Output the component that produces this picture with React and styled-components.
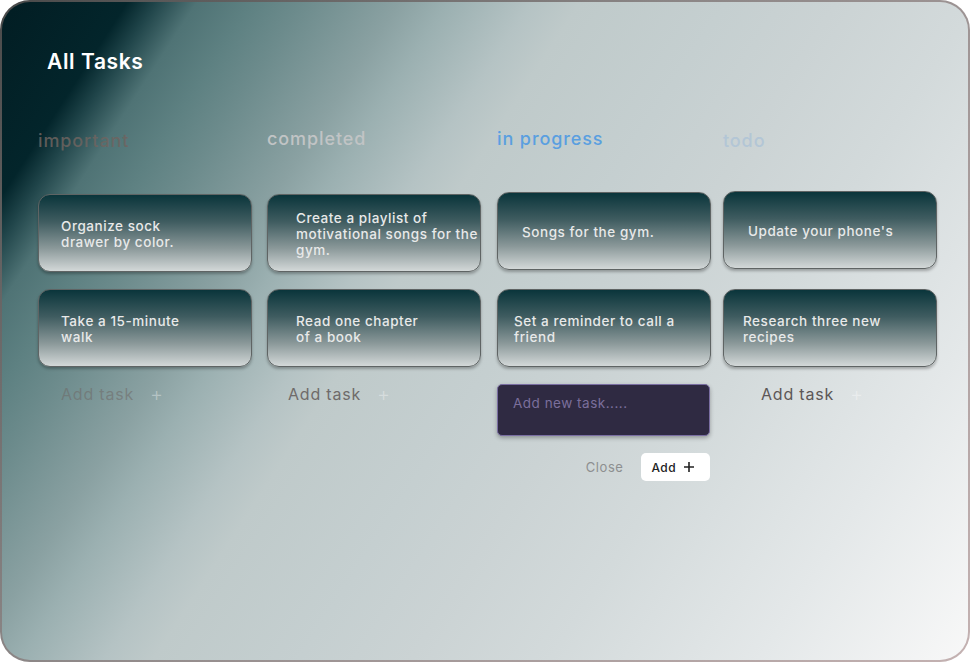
import styled, {createGlobalStyle} from "styled-components";

const GlobalStyle = createGlobalStyle`
    html, body {
        margin: 0;
        padding: 0;
        background: #ffffff;
    }
    body {
        font-family: "Inter", "Open Sans", "Liberation Sans", sans-serif;
    }
    * {
        box-sizing: border-box;
    }
`;

const Frame = styled.div`
    width: 970px;
    height: 662px;
    padding: 2px;
    border-radius: 30px;
    background: linear-gradient(135deg, #4a4a4a 0%, #8a8585 40%, #c4b2b2 100%);
`;

const Board = styled.div`
    height: 100%;
    border-radius: 28px;
    overflow: hidden;
    padding: 47px 0 0 36px;
    background: linear-gradient(
        123deg,
        #021d23 0%,
        #03252b 9%,
        #1f4449 11%,
        #4f7375 14%,
        #5e8182 18%,
        #6c8b8c 21.5%,
        #8aa1a2 28.5%,
        #9bb0b1 32%,
        #b5c3c4 38%,
        #bfcaca 41.5%,
        #c5cfd0 52%,
        #cbd3d4 60%,
        #d3dadb 70%,
        #e4e8e9 85%,
        #f8f8f8 100%
    );
`;

const Title = styled.h1`
    margin: 0 0 0 9px;
    font-size: 21px;
    line-height: 26px;
    font-weight: 600;
    letter-spacing: 0.6px;
    color: #ffffff;
`;

const Columns = styled.div`
    display: grid;
    grid-template-columns: 229px 230px 226px 214px;
    margin-top: 55px;
`;

const Column = styled.div`
    display: flex;
    flex-direction: column;
    width: 214px;
`;

const ColumnTitle = styled.h2`
    margin: ${({lift}) => -lift}px 0 ${({lift}) => 42 + lift}px;
    font-size: 18px;
    line-height: 22px;
    font-weight: 500;
    letter-spacing: 0.9px;
    color: ${({color}) => color};
`;

const Cards = styled.div`
    display: flex;
    flex-direction: column;
    gap: ${({shift}) => 17 + shift}px;
    margin-top: ${({shift}) => -shift}px;
`;

const Card = styled.div`
    height: 78px;
    display: flex;
    align-items: center;
    padding: 1px 0 0 ${({pad}) => pad}px;
    border: 1px solid #5f6464;
    border-radius: 12px;
    background: linear-gradient(180deg, #0a353b 0%, #3f5c60 35%, #8a9899 70%, #d3d8d8 100%);
    box-shadow: 0 2px 3px rgba(0, 0, 0, 0.28);
    font-size: 13.5px;
    line-height: 16px;
    font-weight: 500;
    letter-spacing: 0.55px;
    color: #e8e9e9;
`;

const CardText = styled.p`
    margin: 0;
    max-width: ${({width}) => width}px;
`;

const AddTask = styled.button`
    display: flex;
    align-items: center;
    gap: 16px;
    margin: 16px 0 0 ${({indent}) => indent}px;
    padding: 0;
    border: none;
    background: none;
    font-family: inherit;
    font-size: 16px;
    line-height: 22px;
    letter-spacing: 0.8px;
    color: ${({color}) => color};
    cursor: pointer;

    span {
        color: rgba(255, 255, 255, 0.35);
        font-size: 20px;
        font-weight: 300;
    }
`;

const TaskInput = styled.textarea`
    width: 213px;
    height: 52px;
    margin-top: 17px;
    padding: 10px 15px;
    resize: none;
    border: 1.5px solid #7a6ea2;
    border-radius: 5px;
    background: #2f2a42;
    box-shadow: 0 2px 4px rgba(0, 0, 0, 0.3);
    font-family: inherit;
    font-size: 13.5px;
    letter-spacing: 0.5px;
    color: #e0dcea;
    outline: none;

    &::placeholder {
        color: #7b6f9c;
    }
`;

const Actions = styled.div`
    display: flex;
    justify-content: flex-end;
    align-items: center;
    gap: 17px;
    width: 213px;
    margin-top: 17px;
`;

const CloseButton = styled.button`
    padding: 0;
    border: none;
    background: none;
    font-family: inherit;
    font-size: 13px;
    letter-spacing: 0.6px;
    color: #8d8f90;
    cursor: pointer;
`;

const AddButton = styled.button`
    display: flex;
    align-items: center;
    gap: 7px;
    height: 28px;
    padding: 0 15px 0 11px;
    border: none;
    border-radius: 5px;
    background: #ffffff;
    font-family: inherit;
    font-size: 12px;
    font-weight: 500;
    letter-spacing: 0.4px;
    color: #222222;
    cursor: pointer;
`;

const columns = [
    {
        title: "important",
        color: "rgba(110, 100, 96, 0.85)",
        addColor: "rgba(110, 104, 102, 0.55)",
        addIndent: 23,
        lift: 0,
        shift: 0,
        cards: [
            {text: "Organize sock drawer by color.", pad: 22, width: 125},
            {text: "Take a 15-minute walk", pad: 22, width: 140},
        ],
    },
    {
        title: "completed",
        color: "#c1c4c5",
        addColor: "#6f6b6a",
        addIndent: 21,
        lift: 2,
        shift: 0,
        cards: [
            {text: "Create a playlist of motivational songs for the gym.", pad: 28, width: 190},
            {text: "Read one chapter of a book", pad: 28, width: 132},
        ],
    },
    {
        title: "in progress",
        color: "#5a9fe0",
        lift: 2,
        shift: 2,
        cards: [
            {text: "Songs for the gym.", pad: 24, width: 180},
            {text: "Set a reminder to call a friend", pad: 16, width: 190},
        ],
        open: true,
    },
    {
        title: "todo",
        color: "#b3c6d6",
        addColor: "#5c5757",
        addIndent: 38,
        lift: 0,
        shift: 3,
        cards: [
            {text: "Update your phone's", pad: 24, width: 180},
            {text: "Research three new recipes", pad: 19, width: 160},
        ],
    },
];

const PlusIcon = () => (
    <svg width="12" height="12" viewBox="0 0 12 12" fill="none" stroke="#222" strokeWidth="1.6">
        <path d="M6 1v10M1 6h10"/>
    </svg>
);

const App = () => {
    return (
        <>
            <GlobalStyle/>
            <Frame>
                <Board>
                    <Title>All Tasks</Title>
                    <Columns>
                        {columns.map(column =>
                            <Column key={column.title}>
                                <ColumnTitle color={column.color} lift={column.lift}>
                                    {column.title}
                                </ColumnTitle>
                                <Cards shift={column.shift}>
                                    {column.cards.map(card =>
                                        <Card key={card.text} pad={card.pad}>
                                            <CardText width={card.width}>{card.text}</CardText>
                                        </Card>
                                    )}
                                </Cards>
                                {column.open ?
                                    <>
                                        <TaskInput placeholder="Add new task....."/>
                                        <Actions>
                                            <CloseButton>Close</CloseButton>
                                            <AddButton>Add <PlusIcon/></AddButton>
                                        </Actions>
                                    </>
                                    :
                                    <AddTask indent={column.addIndent} color={column.addColor}>
                                        Add task <span>+</span>
                                    </AddTask>
                                }
                            </Column>
                        )}
                    </Columns>
                </Board>
            </Frame>
        </>
    );
};

export default App;
